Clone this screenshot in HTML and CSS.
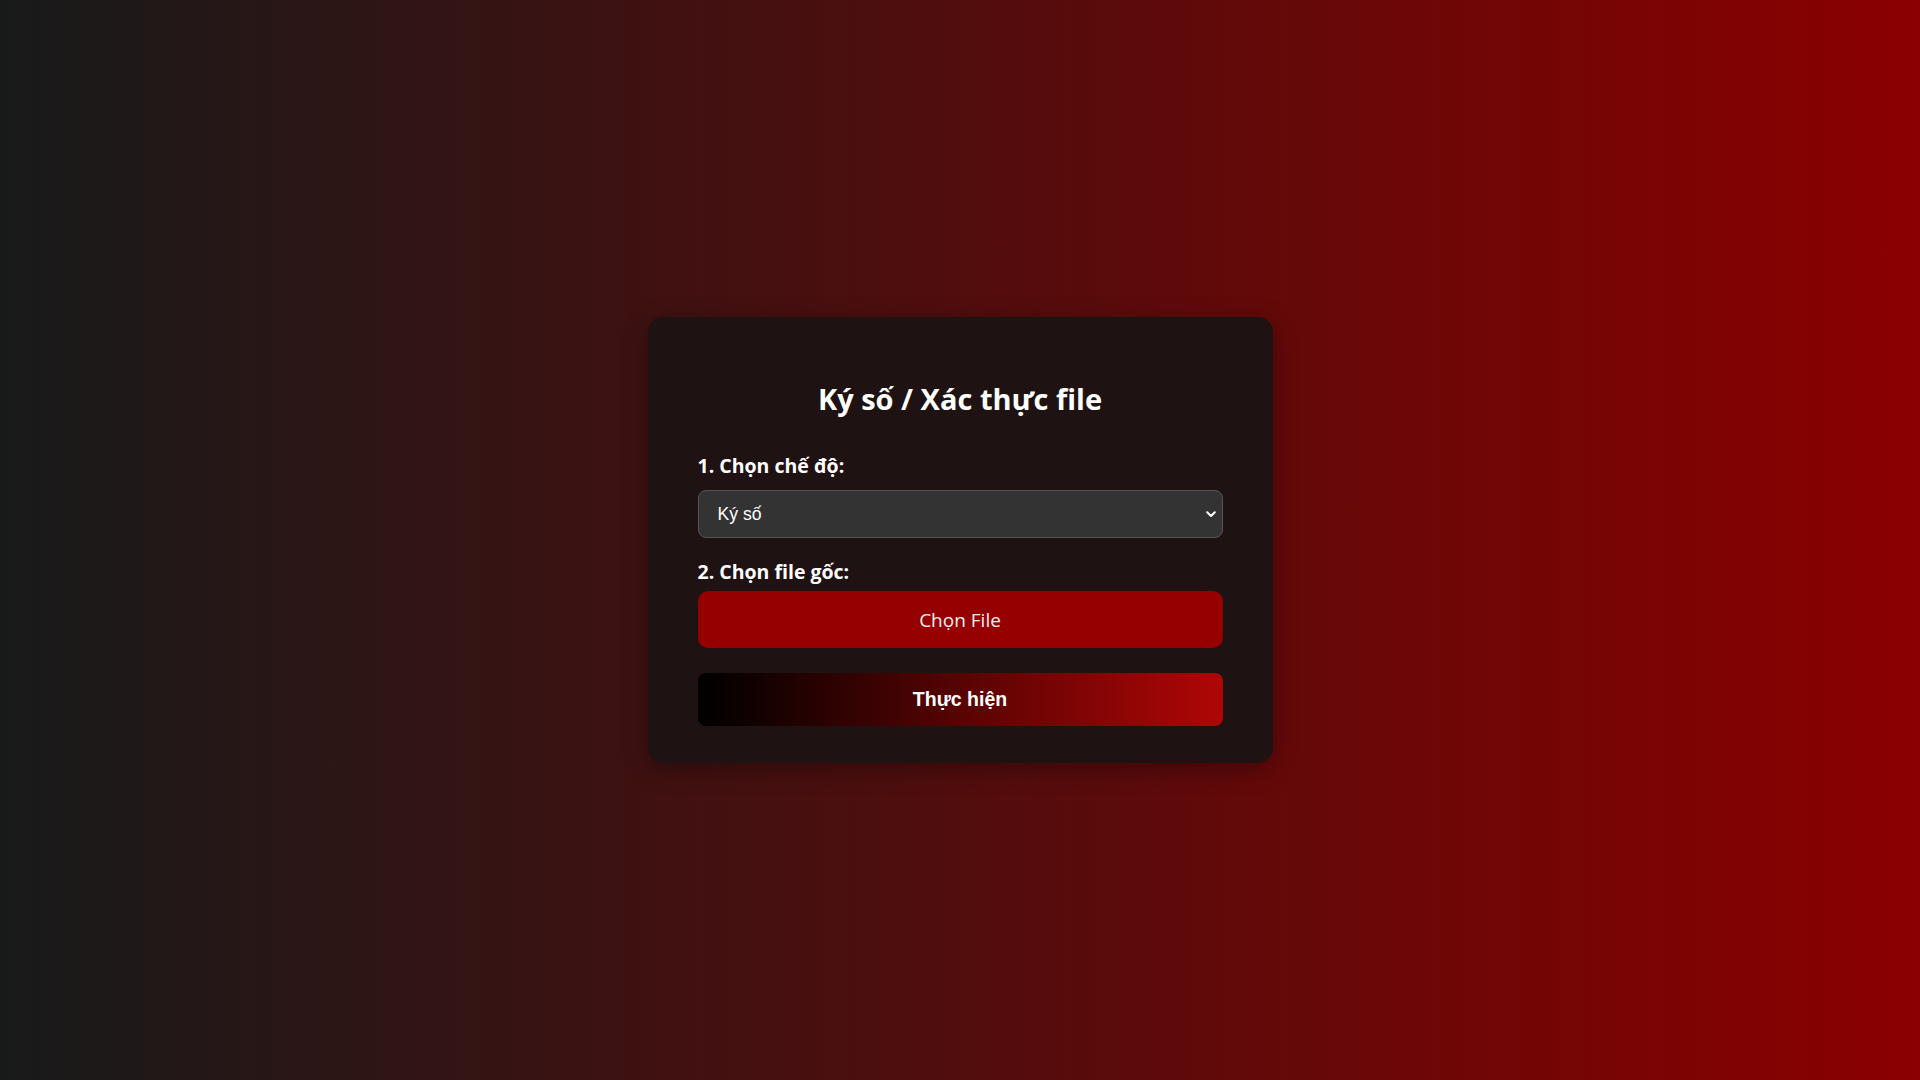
FILE: index.html
```html
<!DOCTYPE html>
<html lang="vi">
<head>
<meta charset="utf-8">
<title>Ký số / Xác thực file</title>
<link rel="stylesheet" href="styles.css">
</head>
<body>
<main class="card">
  <h2 class="title">Ký số / Xác thực file</h2>
  <label class="label" for="mode">1. Chọn chế độ:</label>
  <div class="select-wrap">
    <select id="mode" class="select">
      <option>Ký số</option>
      <option>Xác thực</option>
    </select>
    <svg class="chevron" width="10" height="7" viewBox="0 0 10 7" aria-hidden="true"><path d="M1.2 1.2 L5 5 L8.8 1.2" fill="none" stroke="#fff" stroke-width="2" stroke-linecap="round" stroke-linejoin="round"/></svg>
  </div>
  <label class="label label-file">2. Chọn file gốc:</label>
  <button class="file-btn" type="button">Chọn File</button>
  <button class="run-btn" type="button">Thực hiện</button>
</main>
</body>
</html>
```
FILE: styles.css
```css
html, body {
  height: 100%;
}
body {
  margin: 0;
  background: linear-gradient(to right, #181a1a, #8b0000);
  display: flex;
  align-items: center;
  justify-content: center;
  font-family: "Open Sans", "Noto Sans", sans-serif;
  color: #fff;
}
.card {
  width: 525px;
  padding: 40px 50px 37px;
  background: #1f1212;
  border-radius: 15px;
  box-shadow: 0 6px 24px rgba(0, 0, 0, 0.35);
  display: flex;
  flex-direction: column;
}
.title {
  margin: 24px 0 38px;
  font-size: 29px;
  line-height: 36px;
  font-weight: 700;
  text-align: center;
  letter-spacing: 0;
}
.label {
  font-size: 19.5px;
  line-height: 21px;
  font-weight: 700;
  margin-bottom: 14px;
  letter-spacing: 0;
}
.label-file {
  margin-bottom: 9px;
}
.select-wrap {
  position: relative;
  margin-bottom: 23px;
}
.select {
  appearance: none;
  -webkit-appearance: none;
  width: 100%;
  height: 48px;
  box-sizing: border-box;
  padding: 0 19px;
  background: #333333;
  border: 1px solid #555555;
  border-radius: 8px;
  color: #fff;
  font-family: "Liberation Sans", Arial, sans-serif;
  font-size: 17.6px;
  outline: none;
}
.chevron {
  position: absolute;
  right: 7px;
  top: 21px;
  pointer-events: none;
}
.file-btn {
  height: 57px;
  border: none;
  border-radius: 10px;
  background: #960000;
  color: #f0f0f0;
  font-family: "Open Sans", "Noto Sans", sans-serif;
  font-size: 19px;
  font-weight: 400;
  margin-bottom: 25px;
  padding: 0;
}
.run-btn {
  height: 53px;
  border: none;
  border-radius: 8px;
  background: linear-gradient(to right, #000000, #b00606);
  color: #fff;
  font-family: "Liberation Sans", Arial, sans-serif;
  font-size: 19.5px;
  font-weight: 700;
  padding: 0;
}
```
